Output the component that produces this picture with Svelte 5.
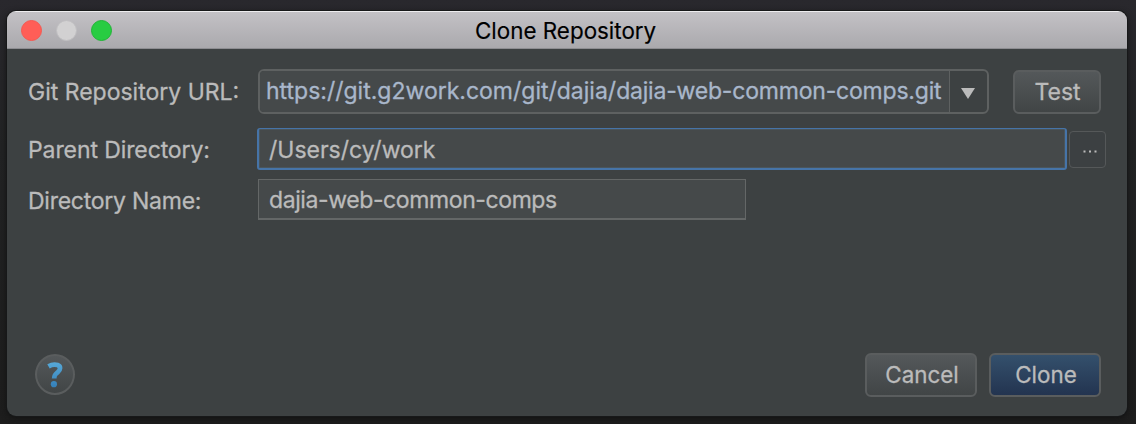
<script>
  let host = 'https://git.g2work.com/git/dajia/';
  let repo = 'dajia-web-common-comps.git';
  let parent = '/Users/cy/work';
  let name = 'dajia-web-common-comps';
</script>

<div class="desktop">
  <section class="window">
    <header>
      <div class="lights"><i class="close"></i><i class="min"></i><i class="zoom"></i></div>
      <h1>Clone Repository</h1>
    </header>
    <main>
      <div class="row first">
        <span class="label">Git Repository URL:</span>
        <div class="combo">
          <div class="value"><span>{host}</span><span class="t-repo">{repo}</span></div>
          <div class="arrow"><svg width="14" height="11" viewBox="0 0 14 11"><path d="M0 0H14L7 11Z" fill="#bbb" /></svg></div>
        </div>
        <button class="test">Test</button>
      </div>
      <div class="row second">
        <span class="label t-parent">Parent Directory:</span>
        <div class="field focused"><span>{parent}</span></div>
        <button class="browse" aria-label="Browse"><svg width="14" height="3" viewBox="0 0 14 3"><path d="M.5 .5h2v2h-2zM6 .5h2v2H6zM11.500 .5h2v2h-2z" fill="#bbb" /></svg></button>
      </div>
      <div class="row third">
        <span class="label t-dir">Directory Name:</span>
        <div class="field name"><span class="t-name">{name}</span></div>
      </div>
      <footer>
        <button class="help" aria-label="Help">
          <svg width="16" height="26" viewBox="0 0 16 26">
            <defs><linearGradient id="q" x1="0" y1="0" x2="0" y2="26" gradientUnits="userSpaceOnUse"><stop stop-color="#57a9d8" /><stop offset="1" stop-color="#347fb8" /></linearGradient></defs>
            <path d="M1.500 4.300C4.500 2.600 8 2.200 10.600 3.100C14 4.400 13.600 8 10.800 10.200C8.400 12 7.200 12.600 7.200 16.500" fill="none" stroke="url(#q)" stroke-width="4.800" />
            <circle cx="6.900" cy="22.200" r="3.100" fill="url(#q)" />
          </svg>
        </button>
        <div class="actions">
          <button class="cancel">Cancel</button>
          <button class="primary">Clone</button>
        </div>
      </footer>
    </main>
  </section>
</div>

<style>
  :global(body) { background: #222224; }
  * { box-sizing: border-box; }
  .desktop {
    height: 424px;
    padding: 11px 9px 8px 7px;
    overflow: hidden;
    background: linear-gradient(#29282d, #222324 35%, #1d1d1d);
    font-family: Inter, "Liberation Sans", sans-serif;
    font-size: 23px;
    color: #bbb;
    -webkit-text-stroke: 0.3px currentColor;
  }
  .window {
    height: 405px;
    border-radius: 9px;
    overflow: hidden;
    background: #3d4142;
    box-shadow: 0 0 0 1px #171819, 0 2px 6px #111;
  }
  header {
    position: relative;
    height: 38px;
    border-top: 1px solid #eeedef;
    border-bottom: 1px solid #8d8d91;
    background: linear-gradient(#c3c1c5, #aaa9ad);
    display: flex;
    align-items: center;
    padding-left: 14px;
  }
  .lights { display: flex; align-items: center; gap: 14px; }
  i { width: 21px; height: 21px; border-radius: 50%; }
  .close { background: #ff5e57; border: 1px solid #f55850; }
  .min { background: #d2d1d2; border: 1px solid #bfbec0; }
  .zoom { background: #28cc42; border: 1px solid #20b536; }
  h1 {
    position: absolute;
    inset: 0;
    margin: 0;
    font-size: 22.400px;
    font-weight: 400;
    color: #000;
    line-height: 38px;
    padding-left: 468px;
    -webkit-text-stroke: 0.15px currentColor;
  }
  span { white-space: nowrap; }
  main { height: 367px; padding: 20px 20px 19px 21px; display: flex; flex-direction: column; }
  .row { display: flex; align-items: center; }
  .label { width: 230px; flex: none; }
  .t-parent { letter-spacing: -0.1px; padding-top: 1px; }
  .t-dir { letter-spacing: -0.25px; padding-top: 2px; }
  .t-name { letter-spacing: -0.4px; }
  .t-repo { letter-spacing: -0.200px; }
  .first { height: 45px; }
  .combo {
    width: 731px;
    height: 45px;
    border: 2px solid #5e6161;
    border-radius: 6px;
    display: flex;
    overflow: hidden;
  }
  .value {
    width: 689px;
    flex: none;
    background: #45494a;
    color: #a9b7cb;
    padding-left: 6px;
    line-height: 40px;
    white-space: nowrap;
  }
  .arrow { flex: 1; border-left: 1px solid #5e6161; display: flex; align-items: center; justify-content: center; padding: 3px 2px 0 0; }
  button {
    font: inherit;
    color: #bbb;
    padding: 0;
    height: 44px;
    border: 2px solid #5a5d5e;
    border-radius: 6px;
    background: linear-gradient(#54585a, #414546);
    display: flex;
    align-items: center;
    justify-content: center;
  }
  .test { width: 88px; margin-left: 24px; padding-left: 1px; }
  .second { height: 42px; margin-top: 14px; }
  .field { background: #45494a; display: flex; align-items: center; }
  .focused {
    width: 810px;
    height: 42px;
    margin-left: -1px;
    border: 2px solid #4674a8;
    border-top-width: 1px;
    border-radius: 3px;
    box-shadow: inset 0 0 0 1px #4a555c;
    padding: 2px 0 0 10px;
  }
  .browse { width: 37px; height: 37px; margin-left: 2px; border: 1px solid #555859; border-radius: 4px; background: #3c4042; padding: 4px 0 0 4px; }
  .third { height: 41px; margin-top: 9px; }
  .name { width: 488px; height: 41px; border: 1px solid #646767; border-bottom-width: 2px; padding: 2px 0 0 10px; }
  footer { margin-top: auto; height: 45px; display: flex; align-items: center; justify-content: space-between; padding: 0 6px 0 7px; }
  .help { width: 40px; height: 41px; border-radius: 50%; }
  .actions { display: flex; gap: 12px; }
  .actions button { width: 112px; font-size: 22.400px; padding: 0 0 0 2px; }
  .actions .primary { background: linear-gradient(#34506c, #233450); }
</style>
